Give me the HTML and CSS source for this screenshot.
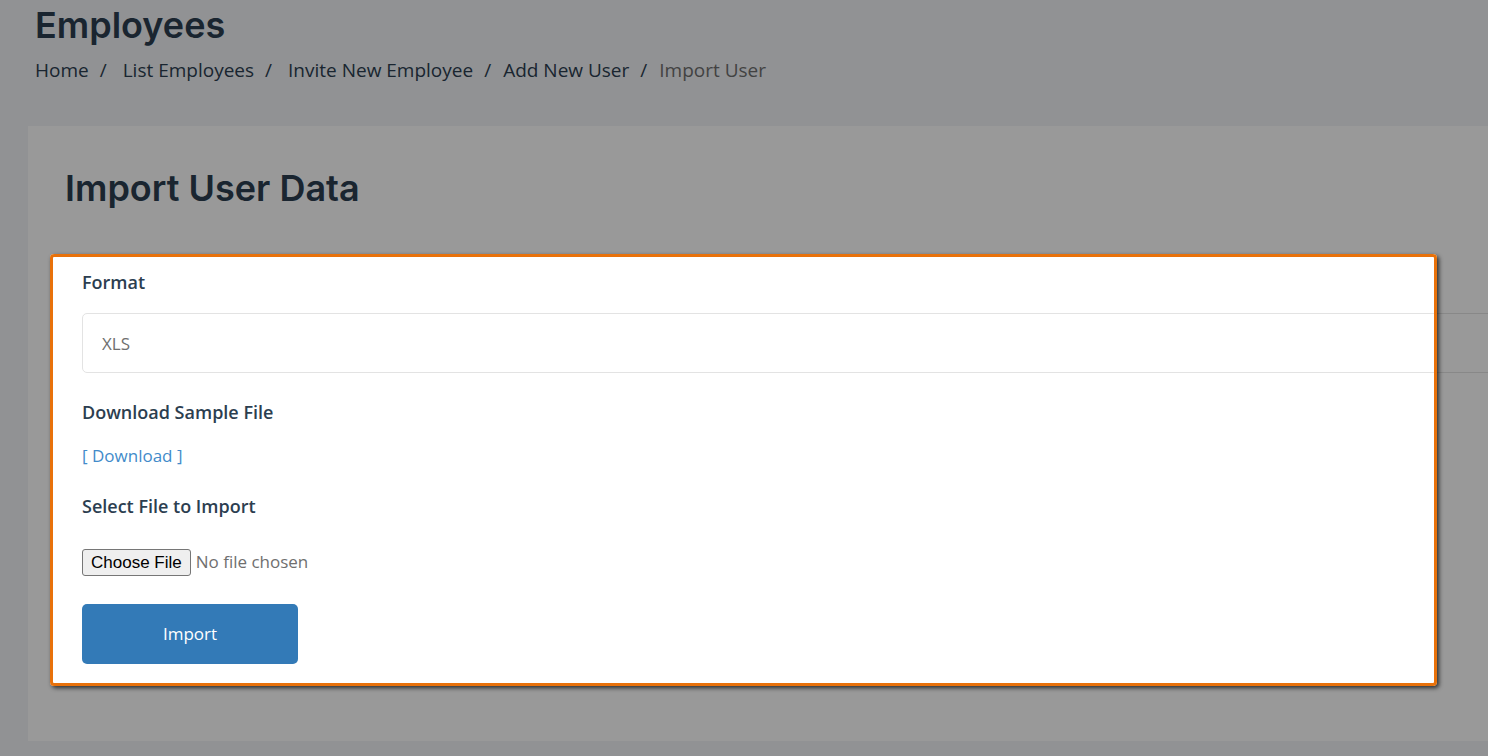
FILE: index.html
```html
<!DOCTYPE html>
<html lang="en">
<head>
    <meta charset="UTF-8">
    <meta name="viewport" content="width=device-width, initial-scale=1.0">
    <title>Import User</title>
    <link rel="stylesheet" href="styles.css">
</head>
<body>
    <header class="page-header">
        <h1>Employees</h1>
        <nav aria-label="Breadcrumb">
            <ol class="breadcrumb">
                <li class="wide"><a href="#">Home</a></li>
                <li class="wide"><a href="#">List Employees</a></li>
                <li><a href="#">Invite New Employee</a></li>
                <li><a href="#">Add New User</a></li>
                <li class="active" aria-current="page">Import User</li>
            </ol>
        </nav>
    </header>

    <main class="card">
        <h2>Import User Data</h2>

        <form class="import-form">
            <div class="form-group">
                <label for="format">Format</label>
                <select id="format" class="form-control">
                    <option>XLS</option>
                </select>
            </div>

            <div class="form-group">
                <h3>Download Sample File</h3>
                <a class="download-link" href="#">[ Download ]</a>
            </div>

            <div class="form-group">
                <label for="import-file">Select File to Import</label>
                <input type="file" id="import-file" class="file-input">
            </div>

            <button type="submit" class="btn-import">Import</button>

            <!-- Highlight frame, dims everything outside it -->
            <div class="spotlight"></div>
        </form>
    </main>
</body>
</html>
```

FILE: styles.css
```css
* {
    box-sizing: border-box;
}
body {
    font-family: "Open Sans", sans-serif;
    font-size: 17px;
    line-height: 24px;
    margin: 0;
    min-height: 100vh;
    padding: 5px 0 15px 28px;
    background-color: #f2f4f7;
    color: #6f6f6f;
    overflow: hidden;
}
h1, h2 {
    font-family: Inter, sans-serif;
    font-size: 36px;
    font-weight: 600;
    line-height: 40px;
    margin: 0;
    color: #2c3e50;
}
.page-header {
    padding: 0 7px;
    margin-bottom: 42px;
}
.breadcrumb {
    display: flex;
    flex-wrap: wrap;
    list-style: none;
    margin: 11px 0 0;
    padding: 0;
    font-size: 19px;
    line-height: 28px;
}
.breadcrumb li + li::before {
    content: "/";
    padding: 0 12px 0 11px;
    color: #2c3e50;
}
.breadcrumb .wide + li::before {
    padding-right: 16px;
}
.breadcrumb a {
    color: #2c3e50;
    text-decoration: none;
}
.breadcrumb .active {
    color: #6f6f6f;
}
.card {
    background-color: #fff;
    padding: 42px 0 77px 37px;
}
.import-form {
    position: relative;
    margin-top: 61px;
    padding-left: 17px;
}
.form-group {
    margin-bottom: 25px;
}
.form-group label,
.form-group h3 {
    display: block;
    margin: 0;
    font-size: 18px;
    font-weight: 600;
    line-height: 26px;
    color: #2c3e50;
}
.form-control {
    display: block;
    appearance: none;
    width: calc(100% + 20px);
    height: 60px;
    margin-top: 18px;
    margin-bottom: 26px;
    padding: 1px 19px 0;
    font: inherit;
    color: #6f6f6f;
    background-color: #fff;
    border: 1px solid #e3e3e3;
    border-radius: 5px;
}
.download-link {
    display: block;
    width: fit-content;
    margin-top: 19px;
    color: #428bca;
    text-decoration: none;
}
.file-input {
    display: block;
    margin-top: 30px;
    margin-bottom: 28px;
    font: inherit;
    color: #6f6f6f;
}
.file-input::file-selector-button {
    font-family: "Liberation Sans", Arial, sans-serif;
    font-size: 17px;
    line-height: 23px;
    margin-right: 5px;
    padding: 1px 8px;
    color: #000;
    background-color: #efefef;
    border: 1px solid #767676;
    border-radius: 3px;
}
.btn-import {
    display: block;
    width: 216px;
    height: 60px;
    font: inherit;
    color: #fff;
    background-color: #337ab7;
    border: none;
    border-radius: 5px;
    cursor: pointer;
}
.spotlight {
    position: absolute;
    inset: -15px 51px -22px -15px;
    border: 3px solid #e8710a;
    border-radius: 4px;
    box-shadow: 2px 2px 4px rgba(0, 0, 0, 0.7), 0 0 0 4000px rgba(0, 0, 0, 0.4);
    pointer-events: none;
}
```
